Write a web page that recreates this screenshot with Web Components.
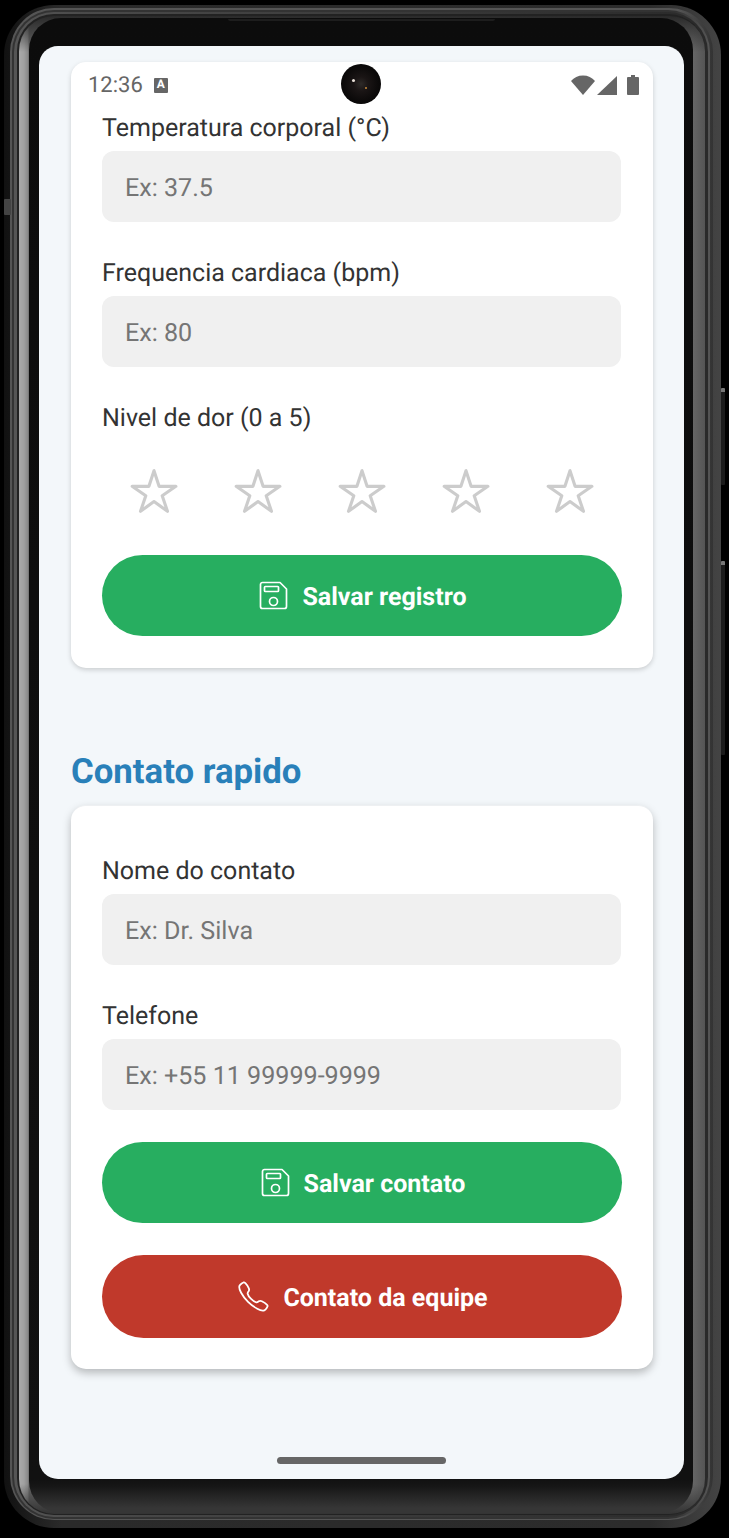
<!DOCTYPE html>
<html lang="pt"><head><meta charset="utf-8"><title>Registro</title>
<style>
html,body{margin:0;padding:0;background:#000}
body{width:729px;height:1538px;overflow:hidden;font-family:Roboto,"Liberation Sans",sans-serif;text-rendering:geometricPrecision}
</style></head>
<body>
<phone-frame>
  <status-bar slot="overlay"></status-bar>
  <app-card top="51">
    <form-field label="Temperatura corporal (°C)" hint="Ex: 37.5"></form-field>
    <form-field label="Frequencia cardiaca (bpm)" hint="Ex: 80"></form-field>
    <pain-rating label="Nivel de dor (0 a 5)"></pain-rating>
    <action-button icon="save" color="#27ae60">Salvar registro</action-button>
  </app-card>
  <section-title>Contato rapido</section-title>
  <app-card top="49" strong>
    <form-field label="Nome do contato" hint="Ex: Dr. Silva"></form-field>
    <form-field label="Telefone" hint="Ex: +55 11 99999-9999" last></form-field>
    <action-button icon="save" color="#27ae60">Salvar contato</action-button>
    <action-button icon="phone" color="#c0392b">Contato da equipe</action-button>
  </app-card>
</phone-frame>
<script>
const ICONS={
 save:`<svg width="33" height="33" viewBox="-2.5 -2.5 33 33" fill="none" stroke="#fff" stroke-width="1.7" stroke-linejoin="round"><path d="M3 1H20.5L27 7.5V25a2 2 0 0 1-2 2H3a2 2 0 0 1-2-2V3a2 2 0 0 1 2-2z"/><rect x="5" y="5" width="14" height="5" rx=".8"/><circle cx="14" cy="20" r="4"/></svg>`,
 phone:`<svg width="35" height="35" viewBox="0 0 512 512" fill="none" stroke="#fff" stroke-width="26" stroke-miterlimit="10"><path d="M451 374c-15.88-16-54.34-39.35-73-48.76-24.3-12.24-26.3-13.24-45.4.95-12.74 9.47-21.21 17.93-36.12 14.75s-47.31-21.11-75.68-49.39-47.34-61.62-50.53-76.48 5.41-23.23 14.79-36c13.22-18 12.22-21 .92-45.3-8.81-18.9-32.84-57-48.9-72.8C119.9 44 119.9 47 108.83 51.6A160.15 160.15 0 0 0 83 65.37C67 76 58.12 84.83 51.91 98.1s-9 44.38 23.07 102.64 54.57 88.05 101.14 134.49S258.5 406.64 310.85 436c64.76 36.27 89.6 29.2 102.91 23s22.18-15 32.83-31a159.09 159.09 0 0 0 13.8-25.8C465 391.17 468 391.17 451 374z"/></svg>`,
 star:`<svg width="50" height="50" viewBox="0 0 512 512" fill="none" stroke="#ccc" stroke-width="32" stroke-linejoin="round"><path d="M480 208H308L256 48l-52 160H32l140 96-54 160 138-100 138 100-54-160z"/></svg>`
};
function def(name,css,html,setup){
 customElements.define(name,class extends HTMLElement{
  connectedCallback(){
   if(this.shadowRoot)return;
   const r=this.attachShadow({mode:'open'});
   r.innerHTML=`<style>${css}</style>`+(typeof html==='function'?html(this):html);
   if(setup)setup(this,r);
  }
 });
}
def('phone-frame',`
 :host{display:block;width:729px;height:1538px;box-sizing:border-box;padding:5px 8px 10px 4px;position:relative}
 .r{height:100%;box-sizing:border-box}
 .r1{border-radius:50px;padding:3px 8px 8px 6px;background:linear-gradient(90deg,#111 0,#2a2a2a 8%,#2c2c2c 90%,#444 100%)}
 .r2{border-radius:44px;padding:2px 3px 1px 2px;background:linear-gradient(90deg,#555 0,#555 95%,#333 100%)}
 .r3{border-radius:42px;padding:2px 2px 2px 2px;background:linear-gradient(90deg,#333 0,#333 95%,#555 100%)}
 .r4{border-radius:40px;padding:2px 3px 2px 3px;background:linear-gradient(90deg,#555 0,#4a4a4a 10%,#2a2a2a 100%)}
 .r5{border-radius:37px;padding:2px 0 1px 2px;background:#222}
 .r6{border-radius:35px;padding:2px 12px 1px 10px;
  background:
   linear-gradient(180deg,#2a2a2a 0,rgba(42,42,42,0) 36px,rgba(42,42,42,0) calc(100% - 30px),#333 100%),
   linear-gradient(90deg,#aaa 0,#a0a0a0 5px,#888 9px,#666 10px,#666 calc(100% - 12px),#555 100%)}
 .bezel{height:100%;box-sizing:border-box;border-radius:32px;padding:28px 9px 34px 10px;
  background:linear-gradient(180deg,#0c0c0c 0,#111 1461px,#161616 1468px,#363636 1490px)}
 .screen{height:100%;box-sizing:border-box;border-radius:19px;background:#f3f7fa;padding:16px 31px 0 32px;position:relative;overflow:hidden}
 .side{position:absolute;background:#1b1b1b;border-radius:1px}
 .vol{left:721px;top:388px;width:4px;height:93px;border-top:4px solid #777}
 .pow{left:721px;top:561px;width:4px;height:190px;border-top:4px solid #777}
 .key{left:4px;top:199px;width:7px;height:16px;background:#444}
 .spk{position:absolute;left:228px;top:19px;width:267px;height:2px;background:#1d1d1d;border-radius:0 0 6px 6px}
 .home{position:absolute;left:238px;bottom:15px;width:169px;height:7px;border-radius:4px;background:#666}
`,`<div class="r r1"><div class="r r2"><div class="r r3"><div class="r r4"><div class="r r5"><div class="r r6"><div class="bezel"><div class="screen"><slot></slot><slot name="overlay"></slot><div class="home"></div></div></div></div></div></div></div></div></div>
 <div class="spk"></div><div class="side vol"></div><div class="side pow"></div><div class="side key"></div>`);
def('status-bar',`
 :host{position:absolute;left:49px;right:45px;top:24px;height:30px;display:flex;align-items:center;color:#666;font:22px/30px Roboto,sans-serif}
 .t{position:relative;top:1px}
 .a{margin-left:11px;width:14px;height:15px;background:#666;color:#fff;font:bold 12px/13px Roboto,sans-serif;text-align:center;border-radius:1px}
 .sp{flex:1}
 .cam{position:absolute;left:253px;top:-6px;width:40px;height:40px;border-radius:50%;background:radial-gradient(circle at 50% 50%,#2e2a28 0,#1a1515 25%,#0c0a0a 60%,#000 100%)}
 .g{position:absolute;left:11px;top:15px;width:3px;height:3px;border-radius:50%;background:#e8e0d8}
 .o{position:absolute;left:24px;top:23px;width:2px;height:2px;border-radius:50%;background:#c88a3a}
 .ic{display:flex;align-items:center}
 svg{display:block}
`,`<span class="t">12:36</span><span class="a">A</span><span class="sp"></span>
 <div class="cam"><div class="g"></div><div class="o"></div></div>
 <div class="ic">
 <svg width="24" height="20" viewBox="0 0 24 20"><path d="M0 6C3 2.500 7 .500 12 .500S21 2.500 24 6L12 20z" fill="#666"/></svg>
 <svg width="20" height="20" viewBox="0 0 20 20" style="margin-left:2px"><path d="M20 1V20H0z" fill="#666"/></svg>
 <svg width="12" height="20" viewBox="0 0 12 20" style="margin-left:10px"><path d="M4 0H8V2H11a1 1 0 0 1 1 1V19a1 1 0 0 1-1 1H1a1 1 0 0 1-1-1V3a1 1 0 0 1 1-1H4z" fill="#666"/></svg>
 </div>`);
def('app-card',`
 :host{display:block;background:#fff;border-radius:15px;box-shadow:0 2px 5px rgba(0,0,0,.17);padding:var(--t,51px) 32px 32px 31px;box-sizing:border-box}
 :host([strong]){box-shadow:0 4px 8px rgba(0,0,0,.25);border-top:1px solid #eef0f2;padding-bottom:31px}
 ::slotted(action-button){margin-top:32px}
`,`<slot></slot>`,(h)=>{
  const t=+h.getAttribute('top');
  h.style.setProperty('--t',(h.hasAttribute('strong')?t+1:t)+'px');
});
def('section-title',`
 :host{display:block;margin:84px 0 13px;color:#2980b9;font:700 34.75px/40px Roboto,sans-serif}
`,`<slot></slot>`);
def('form-field',`
 :host{display:block;margin-bottom:36px}
 :host([last]){margin-bottom:0}
 .l{color:#333;font:25px/30px Roboto,sans-serif;margin-bottom:8px;padding-top:1px;height:29px}
 .i{height:71px;border-radius:12px;background:#f0f0f0;color:#757575;font:25.1px/75px Roboto,sans-serif;padding:0 23px;overflow:hidden}
`,h=>`<div class="l">${h.getAttribute('label')}</div><div class="i">${h.getAttribute('hint')}</div>`);
def('pain-rating',`
 :host{display:block;padding-bottom:7px}
 .l{color:#333;font:25px/30px Roboto,sans-serif;padding-top:1px;height:29px}
 .s{display:flex;justify-content:space-around;margin-top:33px;margin-right:-1px}
 .s span{display:block;height:50px}
`,h=>`<div class="l">${h.getAttribute('label')}</div><div class="s">${Array(5).fill(`<span>${ICONS.star}</span>`).join('')}</div>`);
def('action-button',`
 :host{display:flex;width:520px;align-items:center;justify-content:center;gap:12px;padding:24px 0;border-radius:42px;color:#fff;font:700 25px/33px Roboto,sans-serif;background:var(--c)}
 svg{display:block}
 span{position:relative;top:2px}
`,h=>`${ICONS[h.getAttribute('icon')]}<span><slot></slot></span>`,(h)=>h.style.setProperty('--c',h.getAttribute('color')));
</script>
</body></html>
